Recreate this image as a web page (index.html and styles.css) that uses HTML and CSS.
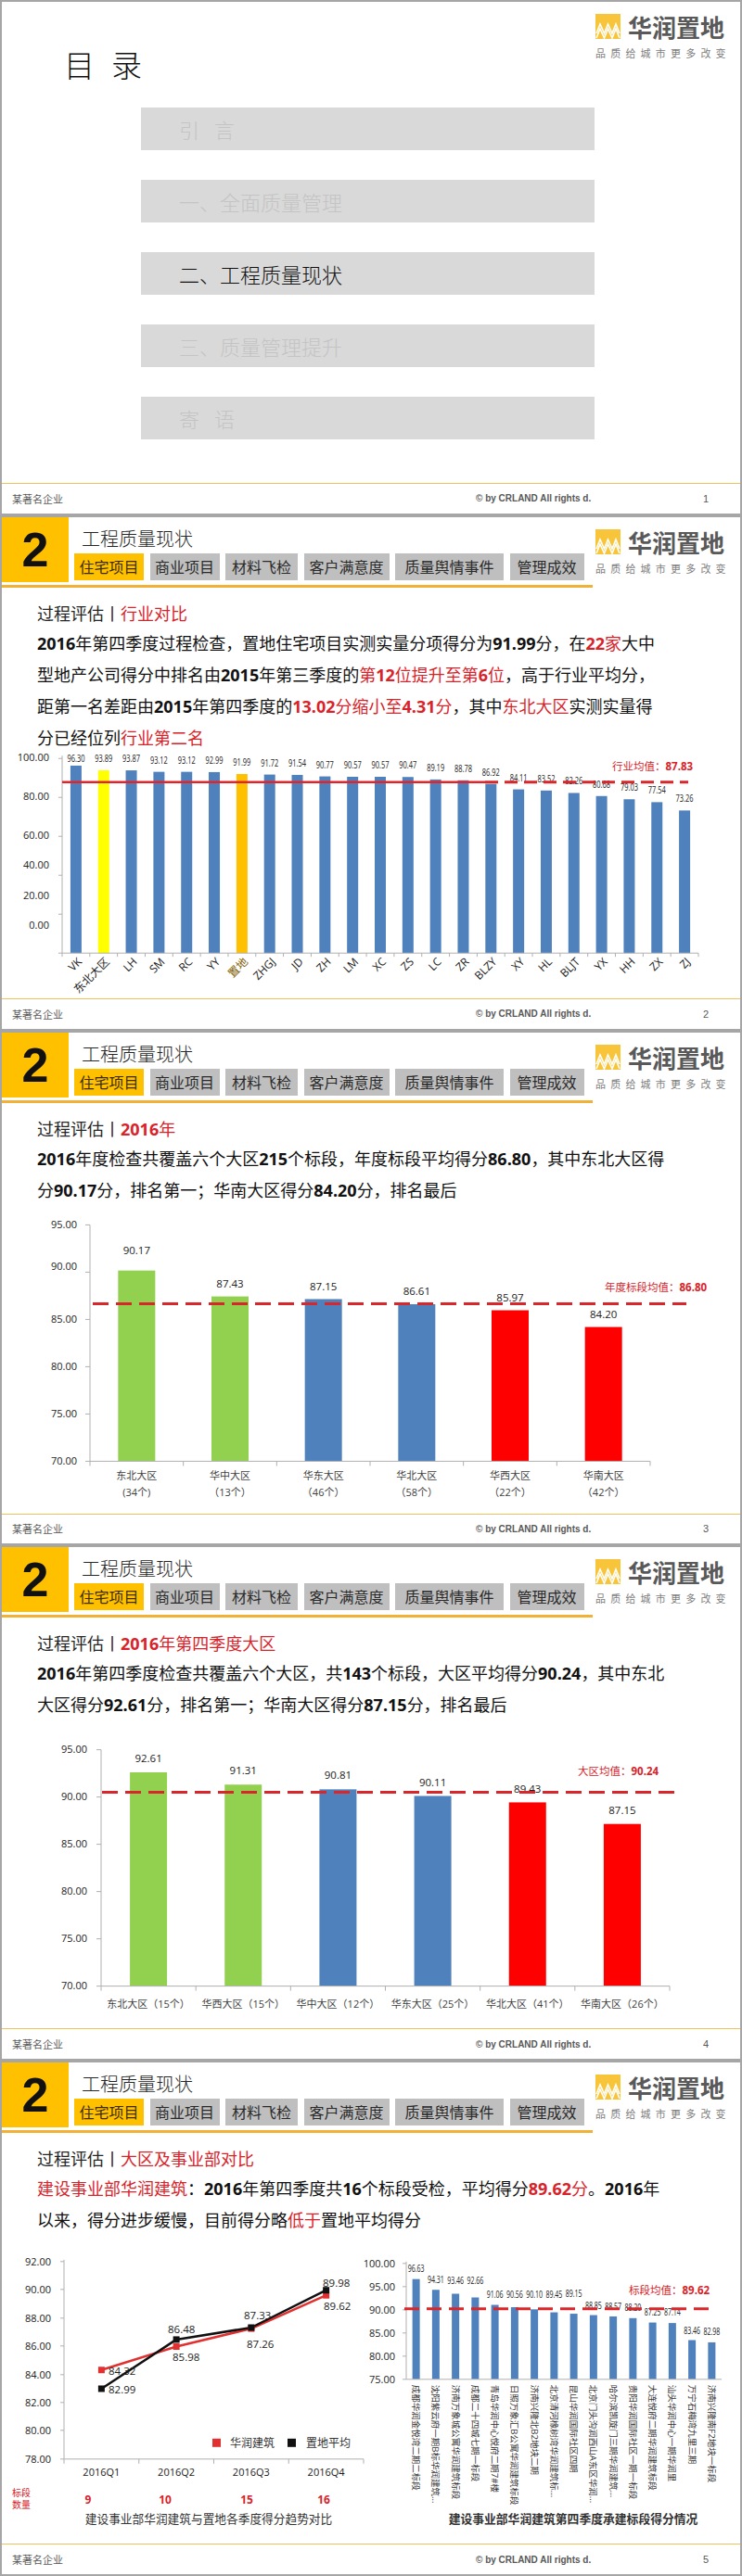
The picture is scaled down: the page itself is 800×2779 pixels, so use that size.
FILE: index.html
```html
<!DOCTYPE html>
<html lang="zh-CN">
<head>
<meta charset="utf-8">
<title>工程质量现状</title>
<link rel="stylesheet" href="styles.css">
</head>
<body>

<section class="slide">
  <div class="cover-top">
    <h1 class="toc-title">目录</h1>
    <div class="logo">
      <div class="logo-row">
        <svg class="logo-mark" viewBox="0 0 27 27"><rect width="27" height="27" fill="#f8c53a"/><polyline points="1,21 5,11 9.5,21 13.5,11 18,21 22,11 26,21" fill="none" stroke="#fff" stroke-width="1.6"/><polyline points="1,26 5,16 9.5,26 13.5,16 18,26 22,16 26,26" fill="none" stroke="#fff" stroke-width="1.6"/></svg>
        <span class="logo-name">华润置地</span>
      </div>
      <div class="logo-tag">品质给城市更多改变</div>
    </div>
  </div>
  <ol class="toc">
    <li class="toc-item sp">引言</li>
    <li class="toc-item">一、全面质量管理</li>
    <li class="toc-item cur">二、工程质量现状</li>
    <li class="toc-item">三、质量管理提升</li>
    <li class="toc-item sp">寄语</li>
  </ol>
  <footer class="foot"><span class="foot-org">某著名企业</span><span class="foot-copy">© by CRLAND All rights d.</span><span class="foot-page">1</span></footer>
</section>

<section class="slide">
  <header class="hdr">
    <div class="hdr-main">
      <div class="hdr-top">
        <div class="num">2</div>
        <div class="hdr-text">
          <div class="hdr-title">工程质量现状</div>
          <nav class="tabs"><span class="tab on">住宅项目</span><span class="tab">商业项目</span><span class="tab">材料飞检</span><span class="tab">客户满意度</span><span class="tab">质量舆情事件</span><span class="tab">管理成效</span></nav>
        </div>
      </div>
      <div class="hdr-rule"></div>
    </div>
    <div class="logo">
      <div class="logo-row">
        <svg class="logo-mark" viewBox="0 0 27 27"><rect width="27" height="27" fill="#f8c53a"/><polyline points="1,21 5,11 9.5,21 13.5,11 18,21 22,11 26,21" fill="none" stroke="#fff" stroke-width="1.6"/><polyline points="1,26 5,16 9.5,26 13.5,16 18,26 22,16 26,26" fill="none" stroke="#fff" stroke-width="1.6"/></svg>
        <span class="logo-name">华润置地</span>
      </div>
      <div class="logo-tag">品质给城市更多改变</div>
    </div>
  </header>
  <div class="body">
    <p class="sub">过程评估丨<span class="red">行业对比</span></p>
    <div class="para">
      <p class="ln"><span class="n">2016</span>年第四季度过程检查，置地住宅项目实测实量分项得分为<span class="n">91.99</span>分，在<span class="red"><span class="n">22</span>家</span>大中</p>
      <p class="ln">型地产公司得分中排名由<span class="n">2015</span>年第三季度的<span class="red">第<span class="n">12</span>位提升至第<span class="n">6</span>位</span>，高于行业平均分，</p>
      <p class="ln">距第一名差距由<span class="n">2015</span>年第四季度的<span class="red"><span class="n">13.02</span>分缩小至<span class="n">4.31</span>分</span>，其中<span class="red">东北大区</span>实测实量得</p>
      <p class="ln">分已经位列<span class="red">行业第二名</span></p>
    </div>
  </div>
  <svg class="chart" id="chartA"></svg>
  <footer class="foot"><span class="foot-org">某著名企业</span><span class="foot-copy">© by CRLAND All rights d.</span><span class="foot-page">2</span></footer>
</section>

<section class="slide">
  <header class="hdr">
    <div class="hdr-main">
      <div class="hdr-top">
        <div class="num">2</div>
        <div class="hdr-text">
          <div class="hdr-title">工程质量现状</div>
          <nav class="tabs"><span class="tab on">住宅项目</span><span class="tab">商业项目</span><span class="tab">材料飞检</span><span class="tab">客户满意度</span><span class="tab">质量舆情事件</span><span class="tab">管理成效</span></nav>
        </div>
      </div>
      <div class="hdr-rule"></div>
    </div>
    <div class="logo">
      <div class="logo-row">
        <svg class="logo-mark" viewBox="0 0 27 27"><rect width="27" height="27" fill="#f8c53a"/><polyline points="1,21 5,11 9.5,21 13.5,11 18,21 22,11 26,21" fill="none" stroke="#fff" stroke-width="1.6"/><polyline points="1,26 5,16 9.5,26 13.5,16 18,26 22,16 26,26" fill="none" stroke="#fff" stroke-width="1.6"/></svg>
        <span class="logo-name">华润置地</span>
      </div>
      <div class="logo-tag">品质给城市更多改变</div>
    </div>
  </header>
  <div class="body">
    <p class="sub">过程评估丨<span class="red"><span class="n">2016</span>年</span></p>
    <div class="para">
      <p class="ln"><span class="n">2016</span>年度检查共覆盖六个大区<span class="n">215</span>个标段，年度标段平均得分<span class="n">86.80</span>，其中东北大区得</p>
      <p class="ln">分<span class="n">90.17</span>分，排名第一；华南大区得分<span class="n">84.20</span>分，排名最后</p>
    </div>
  </div>
  <svg class="chart" id="chartB"></svg>
  <footer class="foot"><span class="foot-org">某著名企业</span><span class="foot-copy">© by CRLAND All rights d.</span><span class="foot-page">3</span></footer>
</section>

<section class="slide">
  <header class="hdr">
    <div class="hdr-main">
      <div class="hdr-top">
        <div class="num">2</div>
        <div class="hdr-text">
          <div class="hdr-title">工程质量现状</div>
          <nav class="tabs"><span class="tab on">住宅项目</span><span class="tab">商业项目</span><span class="tab">材料飞检</span><span class="tab">客户满意度</span><span class="tab">质量舆情事件</span><span class="tab">管理成效</span></nav>
        </div>
      </div>
      <div class="hdr-rule"></div>
    </div>
    <div class="logo">
      <div class="logo-row">
        <svg class="logo-mark" viewBox="0 0 27 27"><rect width="27" height="27" fill="#f8c53a"/><polyline points="1,21 5,11 9.5,21 13.5,11 18,21 22,11 26,21" fill="none" stroke="#fff" stroke-width="1.6"/><polyline points="1,26 5,16 9.5,26 13.5,16 18,26 22,16 26,26" fill="none" stroke="#fff" stroke-width="1.6"/></svg>
        <span class="logo-name">华润置地</span>
      </div>
      <div class="logo-tag">品质给城市更多改变</div>
    </div>
  </header>
  <div class="body">
    <p class="sub">过程评估丨<span class="red"><span class="n">2016</span>年第四季度大区</span></p>
    <div class="para">
      <p class="ln"><span class="n">2016</span>年第四季度检查共覆盖六个大区，共<span class="n">143</span>个标段，大区平均得分<span class="n">90.24</span>，其中东北</p>
      <p class="ln">大区得分<span class="n">92.61</span>分，排名第一；华南大区得分<span class="n">87.15</span>分，排名最后</p>
    </div>
  </div>
  <svg class="chart" id="chartC"></svg>
  <footer class="foot"><span class="foot-org">某著名企业</span><span class="foot-copy">© by CRLAND All rights d.</span><span class="foot-page">4</span></footer>
</section>

<section class="slide">
  <header class="hdr">
    <div class="hdr-main">
      <div class="hdr-top">
        <div class="num">2</div>
        <div class="hdr-text">
          <div class="hdr-title">工程质量现状</div>
          <nav class="tabs"><span class="tab on">住宅项目</span><span class="tab">商业项目</span><span class="tab">材料飞检</span><span class="tab">客户满意度</span><span class="tab">质量舆情事件</span><span class="tab">管理成效</span></nav>
        </div>
      </div>
      <div class="hdr-rule"></div>
    </div>
    <div class="logo">
      <div class="logo-row">
        <svg class="logo-mark" viewBox="0 0 27 27"><rect width="27" height="27" fill="#f8c53a"/><polyline points="1,21 5,11 9.5,21 13.5,11 18,21 22,11 26,21" fill="none" stroke="#fff" stroke-width="1.6"/><polyline points="1,26 5,16 9.5,26 13.5,16 18,26 22,16 26,26" fill="none" stroke="#fff" stroke-width="1.6"/></svg>
        <span class="logo-name">华润置地</span>
      </div>
      <div class="logo-tag">品质给城市更多改变</div>
    </div>
  </header>
  <div class="body">
    <p class="sub">过程评估丨<span class="red">大区及事业部对比</span></p>
    <div class="para">
      <p class="ln"><span class="red">建设事业部华润建筑</span>：<span class="n">2016</span>年第四季度共<span class="n">16</span>个标段受检，平均得分<span class="red"><span class="n">89.62</span>分</span>。<span class="n">2016</span>年</p>
      <p class="ln">以来，得分进步缓慢，目前得分略<span class="red">低于</span>置地平均得分</p>
    </div>
  </div>
  <svg class="chart" id="chartD"></svg>
  <footer class="foot"><span class="foot-org">某著名企业</span><span class="foot-copy">© by CRLAND All rights d.</span><span class="foot-page">5</span></footer>
</section>

<script src="script.js"></script>
</body>
</html>
```

FILE: styles.css
```css
* { box-sizing: border-box; }
html, body { margin: 0; padding: 0; background: #fff; }
body {
  width: 800px;
  font-family: "Open Sans", "Noto Sans CJK SC", sans-serif;
  color: #111;
}

.slide {
  height: 555.8px;
  border: 2px solid #a6a6a6;
  display: flex;
  flex-direction: column;
  overflow: hidden;
  background: #fff;
}

/* cover */
.cover-top { display: flex; justify-content: space-between; align-items: flex-start; flex: none; }
.toc-title {
  margin: 47px 0 0 67px;
  font-family: "Noto Sans CJK SC", sans-serif;
  font-size: 33px;
  line-height: 40px;
  font-weight: 300;
  letter-spacing: 18px;
  color: #111;
}
.cover-top .logo { margin-right: 15px; }
.toc {
  list-style: none;
  margin: 27px 0 0 150px;
  padding: 0;
  width: 489px;
  display: flex;
  flex-direction: column;
  gap: 32px;
}
.toc-item {
  height: 46px;
  background: #d9d9d9;
  padding-left: 41px;
  font-family: "Noto Sans CJK SC", sans-serif;
  font-size: 22px;
  line-height: 46px;
  font-weight: 300;
  color: #c4c4c4;
}
.toc-item.cur { color: #111; }
.toc-item.sp { letter-spacing: 16px; }

/* logo */
.logo { margin-left: 3px; margin-top: 13px; width: 141px; flex: none; }
.logo-row { display: flex; align-items: center; height: 27px; }
.logo-mark { width: 27px; height: 27px; flex: none; display: block; }
.logo-name {
  margin-left: 8px;
  font-family: "Noto Sans CJK SC", sans-serif;
  font-weight: 700;
  font-size: 26px;
  line-height: 27px;
  color: #595959;
  white-space: nowrap;
}
.logo-tag {
  margin-top: 9px;
  font-family: "Noto Sans CJK SC", sans-serif;
  font-size: 11px;
  line-height: 12px;
  letter-spacing: 5.2px;
  color: #808080;
  white-space: nowrap;
}

/* header */
.hdr { display: flex; height: 76px; flex: none; }
.hdr-main { width: 637px; display: flex; flex-direction: column; }
.hdr-top { display: flex; height: 70px; }
.num {
  width: 72px;
  background: #ffc000;
  display: flex;
  align-items: center;
  justify-content: center;
  font-family: "Liberation Sans", sans-serif;
  font-weight: 700;
  font-size: 52px;
  line-height: 1;
  color: #111;
}
.hdr-text { margin-left: 6px; display: flex; flex-direction: column; }
.hdr-title {
  height: 38px;
  padding: 9px 0 0 8px;
  font-family: "Noto Sans CJK SC", sans-serif;
  font-size: 20px;
  line-height: 28px;
  font-weight: 300;
  color: #262626;
}
.tabs {
  display: grid;
  grid-template-columns: 75px 75px 78px 92px 117px 80px;
  column-gap: 6.5px;
  height: 29px;
  margin-top: 1px;
}
.tab {
  background: #bfbfbf;
  color: #2a2a2a;
  font-family: "Noto Sans CJK SC", sans-serif;
  font-size: 16px;
  line-height: 29px;
  text-align: center;
  white-space: nowrap;
}
.tab.on { background: #ffc000; color: #3a2c00; }
.hdr-rule { height: 3px; margin-top: 3px; background: #f2b035; }

/* text body */
.body { flex: none; padding-left: 38px; }
.sub {
  margin: 13px 0 0;
  font-size: 18px;
  line-height: 30px;
  color: #262626;
  white-space: nowrap;
}
.para { font-size: 18px; line-height: 34px; color: #111; }
.ln { margin: 0; white-space: nowrap; }
.red { color: #d8232a; }
.n { font-weight: 700; }

/* charts */
.chart {
  display: block;
  flex: 1 1 0;
  min-height: 0;
  width: 796px;
  overflow: visible;
  font-family: "Open Sans", "Noto Sans CJK SC", sans-serif;
}

/* footer */
.foot {
  margin-top: auto;
  flex: none;
  height: 32.8px;
  border-top: 1.5px solid #f2c05a;
  display: grid;
  grid-template-columns: 500px 245px auto;
  align-items: center;
  padding-left: 11px;
  color: #595959;
}
.foot-org { font-family: "Noto Sans CJK SC", sans-serif; font-size: 11px; }
.foot-copy { font-family: "Liberation Sans", sans-serif; font-weight: 700; font-size: 10px; white-space: nowrap; }
.foot-page { font-family: "Liberation Sans", sans-serif; font-size: 11px; }
```

FILE: script.js
```js
(function () {
  var NS = 'http://www.w3.org/2000/svg';
  var AXIS = '#b0b0b0', RED = '#d8232a', TXT = '#222';

  function Ctx(id) {
    this.svg = document.getElementById(id);
    var r = this.svg.getBoundingClientRect();
    this.ox = r.left + window.pageXOffset;
    this.oy = r.top + window.pageYOffset;
  }
  Ctx.prototype.el = function (tag, attrs) {
    var e = document.createElementNS(NS, tag);
    for (var k in attrs) { if (attrs[k] !== undefined) e.setAttribute(k, attrs[k]); }
    this.svg.appendChild(e);
    return e;
  };
  Ctx.prototype.line = function (x1, y1, x2, y2, stroke, w, dash) {
    return this.el('line', { x1: x1 - this.ox, y1: y1 - this.oy, x2: x2 - this.ox, y2: y2 - this.oy, stroke: stroke, 'stroke-width': w, 'stroke-dasharray': dash });
  };
  Ctx.prototype.rect = function (x, y, w, h, fill) {
    return this.el('rect', { x: x - this.ox, y: y - this.oy, width: w, height: h, fill: fill });
  };
  Ctx.prototype.poly = function (pts, stroke, w) {
    var self = this;
    var s = pts.map(function (p) { return (p[0] - self.ox) + ',' + (p[1] - self.oy); }).join(' ');
    return this.el('polyline', { points: s, fill: 'none', stroke: stroke, 'stroke-width': w, 'stroke-linejoin': 'round' });
  };
  Ctx.prototype.text = function (x, y, parts, o) {
    o = o || {};
    var lx = x - this.ox, ly = y - this.oy;
    var t = this.el('text', {
      x: lx, y: ly, dy: '0.36em',
      'text-anchor': o.anchor || 'middle',
      'font-size': o.size || 11,
      'font-weight': o.weight,
      fill: o.fill || TXT,
      textLength: o.len,
      lengthAdjust: o.len ? 'spacingAndGlyphs' : undefined,
      transform: o.rot !== undefined ? 'rotate(' + o.rot + ' ' + lx + ' ' + ly + ')' : undefined
    });
    if (typeof parts === 'string') {
      t.textContent = parts;
    } else {
      parts.forEach(function (p) {
        var s = document.createElementNS(NS, 'tspan');
        if (p[1]) s.setAttribute('font-weight', p[1]);
        s.textContent = p[0];
        t.appendChild(s);
      });
    }
    return t;
  };

  /* Slide 2: industry comparison */
  (function () {
    var c = new Ctx('chartA');
    var names = ['VK','东北大区','LH','SM','RC','YY','置地','ZHGJ','JD','ZH','LM','XC','ZS','LC','ZR','BLZY','XY','HL','BLJT','YX','HH','ZX','ZJ'];
    var vals = [96.30,93.89,93.87,93.12,93.12,92.99,91.99,91.72,91.54,90.77,90.57,90.57,90.47,89.19,88.78,86.92,84.11,83.52,82.26,80.68,79.03,77.54,73.26];
    var x0 = 67, x1 = 753, base = 1028, k = 2.1, cw = (x1 - x0) / names.length;
    [['100.00',817],['80.00',859],['60.00',901],['40.00',933],['20.00',966],['0.00',998]].forEach(function (l) {
      c.text(53, l[1], l[0], { anchor: 'end', size: 11 });
    });
    for (var j = 0; j <= 5; j++) c.line(x0 - 4, base - 42 * j, x0, base - 42 * j, AXIS, 1);
    vals.forEach(function (v, i) {
      var cx = x0 + (i + 0.5) * cw, h = v * k, top = base - h;
      c.rect(cx - 6, top, 12, h, i === 1 ? '#ffff00' : (i === 6 ? '#ffc000' : '#4f81bd'));
      c.text(cx, top - (i === 0 ? 8 : 13), v.toFixed(2), { size: 11, len: 19 });
      c.text(cx + 4, 1035, names[i], { anchor: 'end', size: 12, rot: -45, fill: i === 6 ? '#7f6000' : TXT });
    });
    c.line(x0, 815, x0, base, AXIS, 1);
    c.line(x0, base, x1, base, AXIS, 1);
    for (var i = 0; i <= names.length; i++) { var tx = x0 + i * cw; c.line(tx, base, tx, base + 4, AXIS, 1); }
    var ay = base - 87.83 * k;
    c.line(x0, ay, 523, ay, '#e0242a', 2.5);
    c.line(523, ay, 742, ay, '#d9262a', 3, '14 7');
    c.text(660, 827, [['行业均值：'], ['87.83', 700]], { anchor: 'start', size: 11.5, fill: RED });
  })();

  /* Slides 3 & 4: region comparison */
  function regionChart(id, o) {
    var c = new Ctx(id);
    var cw = (o.x1 - o.x0) / 6;
    var cols = ['#92d050','#92d050','#4f81bd','#4f81bd','#ff0000','#ff0000'];
    ['95.00','90.00','85.00','80.00','75.00','70.00'].forEach(function (t, j) {
      c.text(o.lx, o.ly[j], t, { anchor: 'end', size: 11 });
      c.line(o.x0 - 5, o.base - 255 + 51 * j, o.x0, o.base - 255 + 51 * j, AXIS, 1);
    });
    o.vals.forEach(function (v, i) {
      var cx = o.x0 + (i + 0.5) * cw, h = (v - 70) * 10.2, top = o.base - h;
      c.rect(cx - 20, top, 40, h, cols[i]);
      c.text(cx, top - o.off[i], v.toFixed(2), { size: 11.5 });
      o.cats[i].forEach(function (s, r) { c.text(cx, o.cy + r * 18, s, { size: 11, fill: '#404040' }); });
    });
    c.line(o.x0, o.base - 255, o.x0, o.base, AXIS, 1);
    c.line(o.x0, o.base, o.x1, o.base, AXIS, 1);
    for (var i = 0; i <= 6; i++) { var tx = o.x0 + i * cw; c.line(tx, o.base, tx, o.base + 5, AXIS, 1); }
    c.line(o.ax0, o.ay, o.ax1, o.ay, '#d9262a', 3, '17 8');
    c.text(o.tx, o.ty, [[o.tl], [o.tv, 700]], { anchor: 'start', size: 11.5, fill: RED });
  }

  regionChart('chartB', {
    x0: 97, x1: 701, base: 1576, lx: 83, ly: [1321, 1366, 1423, 1474, 1525, 1576],
    vals: [90.17, 87.43, 87.15, 86.61, 85.97, 84.20], off: [22, 14, 14, 14, 14, 14],
    cats: [['东北大区', '(34个)'], ['华中大区', '（13个）'], ['华东大区', '（46个）'], ['华北大区', '（58个）'], ['华西大区', '（22个）'], ['华南大区', '（42个）']],
    cy: 1592, ax0: 100, ax1: 740, ay: 1406, tx: 652, ty: 1388, tl: '年度标段均值：', tv: '86.80'
  });

  regionChart('chartC', {
    x0: 109, x1: 722, base: 2143, lx: 94, ly: [1887, 1938, 1989, 2040, 2091, 2142],
    vals: [92.61, 91.31, 90.81, 90.11, 89.43, 87.15], off: [15, 15, 15, 15, 15, 15],
    cats: [['东北大区（15个）'], ['华西大区（15个）'], ['华中大区（12个）'], ['华东大区（25个）'], ['华北大区（41个）'], ['华南大区（26个）']],
    cy: 2162, ax0: 110, ax1: 728, ay: 1934, tx: 623, ty: 1911, tl: '大区均值：', tv: '90.24'
  });

  /* Slide 5: trend line + project bars */
  (function () {
    var c = new Ctx('chartD');
    var x0 = 69, x1 = 392, base = 2653, k = 15.2, cw = (x1 - x0) / 4;
    [['92.00',2440],['90.00',2470],['88.00',2501],['86.00',2531],['84.00',2562],['82.00',2592],['80.00',2622],['78.00',2653]].forEach(function (l) {
      c.text(55, l[1], l[0], { anchor: 'end', size: 11 });
      c.line(x0 - 4, l[1], x0, l[1], AXIS, 1);
    });
    c.line(x0, 2438, x0, base, AXIS, 1);
    c.line(x0, base, x1, base, AXIS, 1);
    for (var i = 0; i <= 4; i++) c.line(x0 + i * cw, base, x0 + i * cw, base + 5, AXIS, 1);
    function pts(arr) { return arr.map(function (v, i) { return [x0 + (i + 0.5) * cw, base - (v - 78) * k]; }); }
    var rp = pts([84.32, 85.98, 87.26, 89.62]), bp = pts([82.99, 86.48, 87.33, 89.98]);
    c.poly(rp, '#e0302f', 2.5);
    c.poly(bp, '#111', 2.5);
    rp.forEach(function (p) { c.rect(p[0] - 3.5, p[1] - 3.5, 7, 7, '#e0302f'); });
    bp.forEach(function (p) { c.rect(p[0] - 3.5, p[1] - 3.5, 7, 7, '#111'); });
    [['84.32',117,2558],['85.98',186,2543],['87.26',266,2529],['89.62',349,2488],
     ['82.99',117,2578],['86.48',181,2513],['87.33',263,2498],['89.98',348,2463]].forEach(function (l) {
      c.text(l[1], l[2], l[0], { anchor: 'start', size: 11.5 });
    });
    ['2016Q1','2016Q2','2016Q3','2016Q4'].forEach(function (s, i) { c.text(x0 + (i + 0.5) * cw, 2667, s, { size: 11 }); });
    c.rect(229, 2631, 9, 9, '#e0302f');
    c.text(248, 2636, '华润建筑', { anchor: 'start', size: 12, fill: '#333' });
    c.rect(310, 2631, 9, 9, '#111');
    c.text(330, 2636, '置地平均', { anchor: 'start', size: 12, fill: '#333' });
    c.text(13, 2690, '标段', { anchor: 'start', size: 10, fill: RED });
    c.text(13, 2703, '数量', { anchor: 'start', size: 10, fill: RED });
    [['9',95],['10',178],['15',266],['16',349]].forEach(function (l) {
      c.text(l[1], 2697, l[0], { size: 12, weight: 700, fill: RED });
    });
    c.text(225, 2718, '建设事业部华润建筑与置地各季度得分趋势对比', { size: 12.7, fill: '#333' });

    /* right: project bars */
    var ex0 = 438, ex1 = 778, eb = 2567, ek = 5;
    var names = ['成都华润金悦湾二期二标段','沈阳紫云府一期B标华润建筑...','济南万象城公寓华润建筑标段','成都二十四城七期一标段','青岛华润中心悦府二期7#楼','日照万象汇B公寓华润建筑标段','济南兴隆北B2地块二期','北京清河橡树湾华润建筑标...','昆山华润国际社区四期','北京门头沟润西山A东区华润...','哈尔滨凯旋门三期华润建筑...','贵阳华润国际社区一期一标段','大连悦府二期华润建筑标段','汕头华润中心一期华润里','万宁石梅湾九里三期','济南兴隆南F2地块一标段'];
    var vals = [96.63,94.31,93.46,92.66,91.06,90.56,90.10,89.45,89.15,88.85,88.57,88.20,87.25,87.14,83.46,82.98];
    var ly = [2447,2459,2460,2460,2475,2475,2475,2475,2474,2487,2488,2489,2494,2494,2514,2515];
    var ecw = (ex1 - ex0) / names.length;
    [['100.00',2442],['95.00',2467],['90.00',2492],['85.00',2517],['80.00',2542],['75.00',2567]].forEach(function (l, j) {
      c.text(426, l[1], l[0], { anchor: 'end', size: 11 });
      c.line(ex0 - 4, eb - 25 * (5 - j), ex0, eb - 25 * (5 - j), AXIS, 1);
    });
    vals.forEach(function (v, i) {
      var cx = ex0 + (i + 0.5) * ecw, h = (v - 75) * ek, top = eb - h;
      c.rect(cx - 4, top, 8, h, '#4f81bd');
      c.text(cx, ly[i], v.toFixed(2), { size: 11, len: 18 });
      c.text(cx, 2573, names[i], { anchor: 'start', size: 9.5, rot: 90, fill: '#333' });
    });
    c.line(ex0, 2440, ex0, eb, AXIS, 1);
    c.line(ex0, eb, ex1, eb, AXIS, 1);
    c.line(436, 2491, 771, 2491, '#d9262a', 3, '16 8');
    c.text(678, 2471, [['标段均值：'], ['89.62', 700]], { anchor: 'start', size: 11.5, fill: RED });
    c.text(618, 2718, '建设事业部华润建筑第四季度承建标段得分情况', { size: 12.8, weight: 700, fill: '#333' });
  })();
})();
```
